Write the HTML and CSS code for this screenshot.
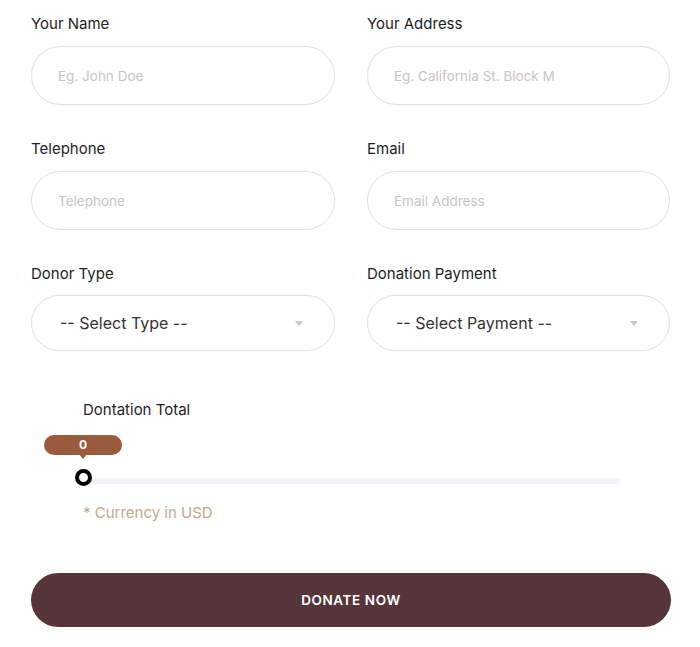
FILE: index.html
```html
<!DOCTYPE html>
<html lang="en">
<head>
    <meta charset="UTF-8">
    <meta name="viewport" content="width=device-width, initial-scale=1.0">
    <title>Donation Form</title>
    <link rel="stylesheet" href="styles.css">
</head>
<body>
    <form class="donate-form">
        <div class="grid">
            <div class="field">
                <label>Your Name</label>
                <input type="text" placeholder="Eg. John Doe">
            </div>
            <div class="field">
                <label>Your Address</label>
                <input type="text" placeholder="Eg. California St. Block M">
            </div>
            <div class="field">
                <label>Telephone</label>
                <input type="text" placeholder="Telephone">
            </div>
            <div class="field">
                <label>Email</label>
                <input type="text" placeholder="Email Address">
            </div>
            <div class="field">
                <label>Donor Type</label>
                <div class="select">-- Select Type --<span class="caret"></span></div>
            </div>
            <div class="field">
                <label>Donation Payment</label>
                <div class="select">-- Select Payment --<span class="caret"></span></div>
            </div>
        </div>

        <div class="total">
            <label>Dontation Total</label>
            <div class="slider">
                <div class="bubble">0</div>
                <div class="track"></div>
                <div class="thumb"></div>
            </div>
            <p class="note">* Currency in USD</p>
        </div>

        <button type="button" class="btn">DONATE NOW</button>
    </form>
</body>
</html>
```

FILE: styles.css
```css
body{margin:0; background:#fff; font-family: Inter, "Open Sans", sans-serif; color:#222;}

.donate-form{padding:13px 29px 0 31px;}

.grid{display:grid; grid-template-columns: 304px 303px; column-gap:32px; row-gap:33px;}

.field label{display:block; font-size:15px; line-height:20px; padding-top:1px; margin-bottom:12px; color:#1e1e1e;}

.field input{box-sizing:border-box; width:100%; height:59px; border:1px solid #e2dede; border-radius:30px; padding:0 26px; font-family:inherit; font-size:13.5px; color:#333; outline:none;}
.field input::placeholder{color:#c9c3c6;}

.select{position:relative; box-sizing:border-box; height:56px; border:1px solid #e2dede; border-radius:28px; padding:0 28px; display:flex; align-items:center; font-size:16px; color:#333; margin-top:-1px;}
.caret{position:absolute; right:31px; top:25px; border-left:4px solid transparent; border-right:4px solid transparent; border-top:5px solid #c8c8c8;}

.total{padding:49px 0 0 52px;}
.total label{display:block; font-size:15px; line-height:20px; color:#1e1e1e;}

.slider{position:relative; height:57px; margin-top:26px; width:537px;}
.bubble{position:absolute; left:-39px; top:-11px; width:78px; height:20px; border-radius:10px; background:#9a5a3e; color:#fff; font-size:12px; font-weight:700; text-align:center; line-height:20px;}
.bubble::after{content:""; position:absolute; left:35px; bottom:-4px; border-left:4px solid transparent; border-right:4px solid transparent; border-top:5px solid #9a5a3e;}
.track{position:absolute; left:0; right:0; top:32px; height:6px; border-radius:3px; background:#f1f3f8;}
.thumb{position:absolute; left:-8px; top:23px; width:9px; height:9px; border:4px solid #000; border-radius:50%; background:#fff;}

.note{margin:0; font-size:15px; color:#c3a88c; line-height:20px;}

.btn{display:block; box-sizing:border-box; width:640px; height:54px; margin-top:50px; border:none; border-radius:27px; background:#56363a; color:#fff; font-family:inherit; font-size:13.5px; font-weight:600; letter-spacing:0.6px;}
```
